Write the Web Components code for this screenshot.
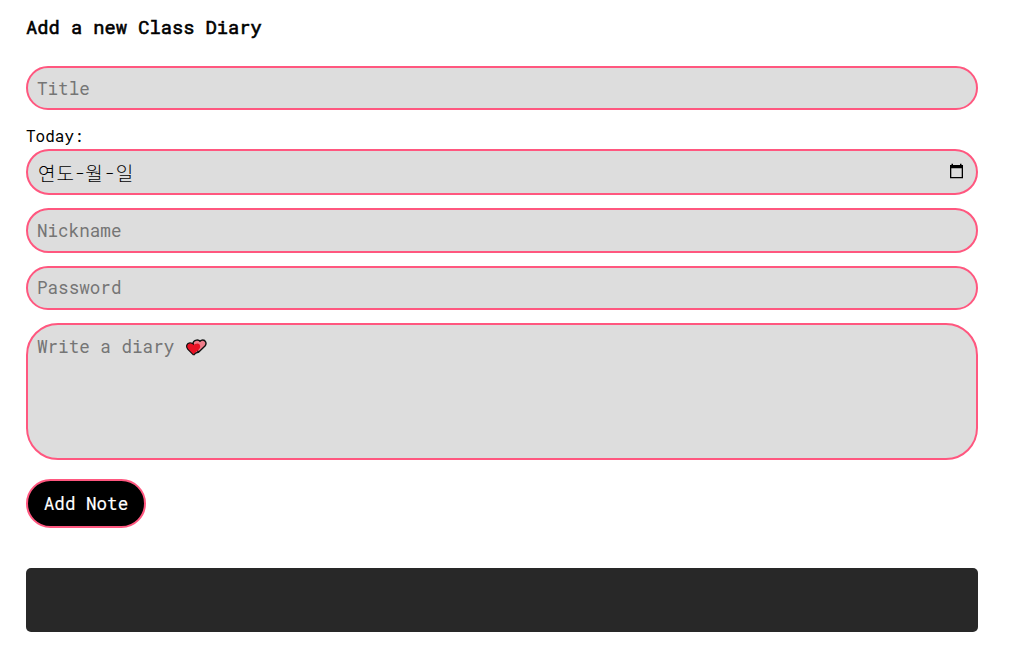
<!DOCTYPE html>
<html lang="ko">
<head>
<meta charset="utf-8">
<title>Class Diary</title>
<style>
body{margin:0;background:#fff;color:#000;font-family:"Roboto Mono","DejaVu Sans Mono","Noto Sans CJK KR",monospace}
</style>
</head>
<body>
<diary-form>
<span slot="title">Add a new Class Diary</span>
<diary-field>Title</diary-field>
<diary-date label="Today:"></diary-date>
<diary-field style="--h:45px;--gap:13px">Nickname</diary-field>
<diary-field style="--bottom:2px">Password</diary-field>
<diary-field style="--h:137px;--radius:32px;--align:flex-start;--top:10px;--gap:19px">Write a diary <heart-icon></heart-icon></diary-field>
<diary-button>Add Note</diary-button>
<diary-footer></diary-footer>
</diary-form>
<script>
function define(name, html) {
  const template = document.createElement('template');
  template.innerHTML = html;
  customElements.define(name, class extends HTMLElement {
    constructor() {
      super();
      this.attachShadow({mode: 'open'}).append(template.content.cloneNode(true));
    }
    connectedCallback() {
      const label = this.shadowRoot.querySelector('label');
      if (label) label.textContent = this.getAttribute('label');
    }
  });
}
define('diary-form', `<style>
:host{display:flex;flex-direction:column;align-items:stretch;width:952px;margin-left:26px;padding-top:14px}
h3{margin:0 0 27px;font-size:18.72px;line-height:25px;font-weight:400;-webkit-text-stroke:.6px #000}
</style><h3><slot name="title"></slot></h3><slot></slot>`);
define('diary-field', `<style>
:host{display:block;margin-bottom:var(--gap,13px)}
.box{box-sizing:border-box;display:flex;align-items:var(--align,center);height:var(--h,44px);padding:var(--top,0) 9px var(--bottom,0);border:2px solid #ff577f;border-radius:var(--radius,24px);background:#ddd;color:#757575;font-size:17.6px;line-height:23px;white-space:pre}
</style><div class="box"><span><slot></slot></span></div>`);
define('diary-date', `<style>
:host{display:block;margin:3px 0 13px}
label{display:block;height:23px;line-height:19px;font-size:16px}
.box{box-sizing:border-box;display:flex;align-items:center;justify-content:space-between;height:46px;padding:0 12px 0 10px;border:2px solid #ff577f;border-radius:24px;background:#ddd}
.date{display:flex;font-family:"Noto Sans CJK KR",sans-serif;font-weight:300;font-size:19px;line-height:24px;letter-spacing:.9px;padding-top:1px}
.date i{font-style:normal;width:10.5px;text-align:center;font-family:"Roboto Mono",monospace;font-size:17.6px;letter-spacing:0}
.date b{font-weight:inherit}
.date b + i{width:12px}
svg{display:block;margin-top:-3px}
</style><label></label><div class="box"><span class="date"><span>연도</span><i>-</i><b>월</b><i>-</i><span>일</span></span>
<svg width="15" height="16" viewBox="0 0 15 16"><path d="M1 2h1.5V.7H4V2h7V.7h1.5V2H14v13.2H1zM2.3 5.2v8.7h10.4V5.2z" fill-rule="evenodd"/></svg></div>`);
define('diary-button', `<style>
:host{display:flex;align-items:center;justify-content:center;align-self:flex-start;box-sizing:border-box;width:120px;height:49px;margin-bottom:40px;border:2px solid #ff577f;border-radius:25px;background:#000;color:#fff;font-size:17.6px;line-height:23px;-webkit-text-stroke:.15px #fff}
</style><slot></slot>`);
define('diary-footer', `<style>:host{display:block;height:64px;border-radius:5px;background:#282828}</style>`);
define('heart-icon', `<style>:host{display:inline-block;width:21px;height:17px;vertical-align:-3px;margin-left:1.5px;line-height:0;white-space:normal}svg{display:block}</style><svg width="21" height="17" viewBox="0 0 21 17"><g stroke="#111" stroke-width="1.4" stroke-linejoin="round"><path fill="#ef7e8b" d="M12.5 13.2 19 7C21.2 4.3 19.3 1 16.8 1c-1.4 0-2.2.6-2.8 1.3C13.2 1.2 12 .8 10.5 1.1 8 1.6 6.8 3.6 7 5.5z"/><path fill="#e81224" d="M7.7 16 1.7 9.9C-.3 7.3 1 4.1 3.8 3.9 5.5 3.8 6.9 4.5 7.7 5.7"/></g><path fill="#e81224" d="M7.7 15.4 13.3 9.9C15.2 7.6 14 4.6 11.6 4.4 9.8 4.3 8.4 5 7.7 6.2 6.5 4.6 3.6 4 2.2 5.6 1 7.1 1.5 8.9 2.8 10.4z"/><path d="m7.7 16 2-2 3-1" fill="none" stroke="#111" stroke-width="1.4"/></svg>`);
</script>
</body>
</html>
